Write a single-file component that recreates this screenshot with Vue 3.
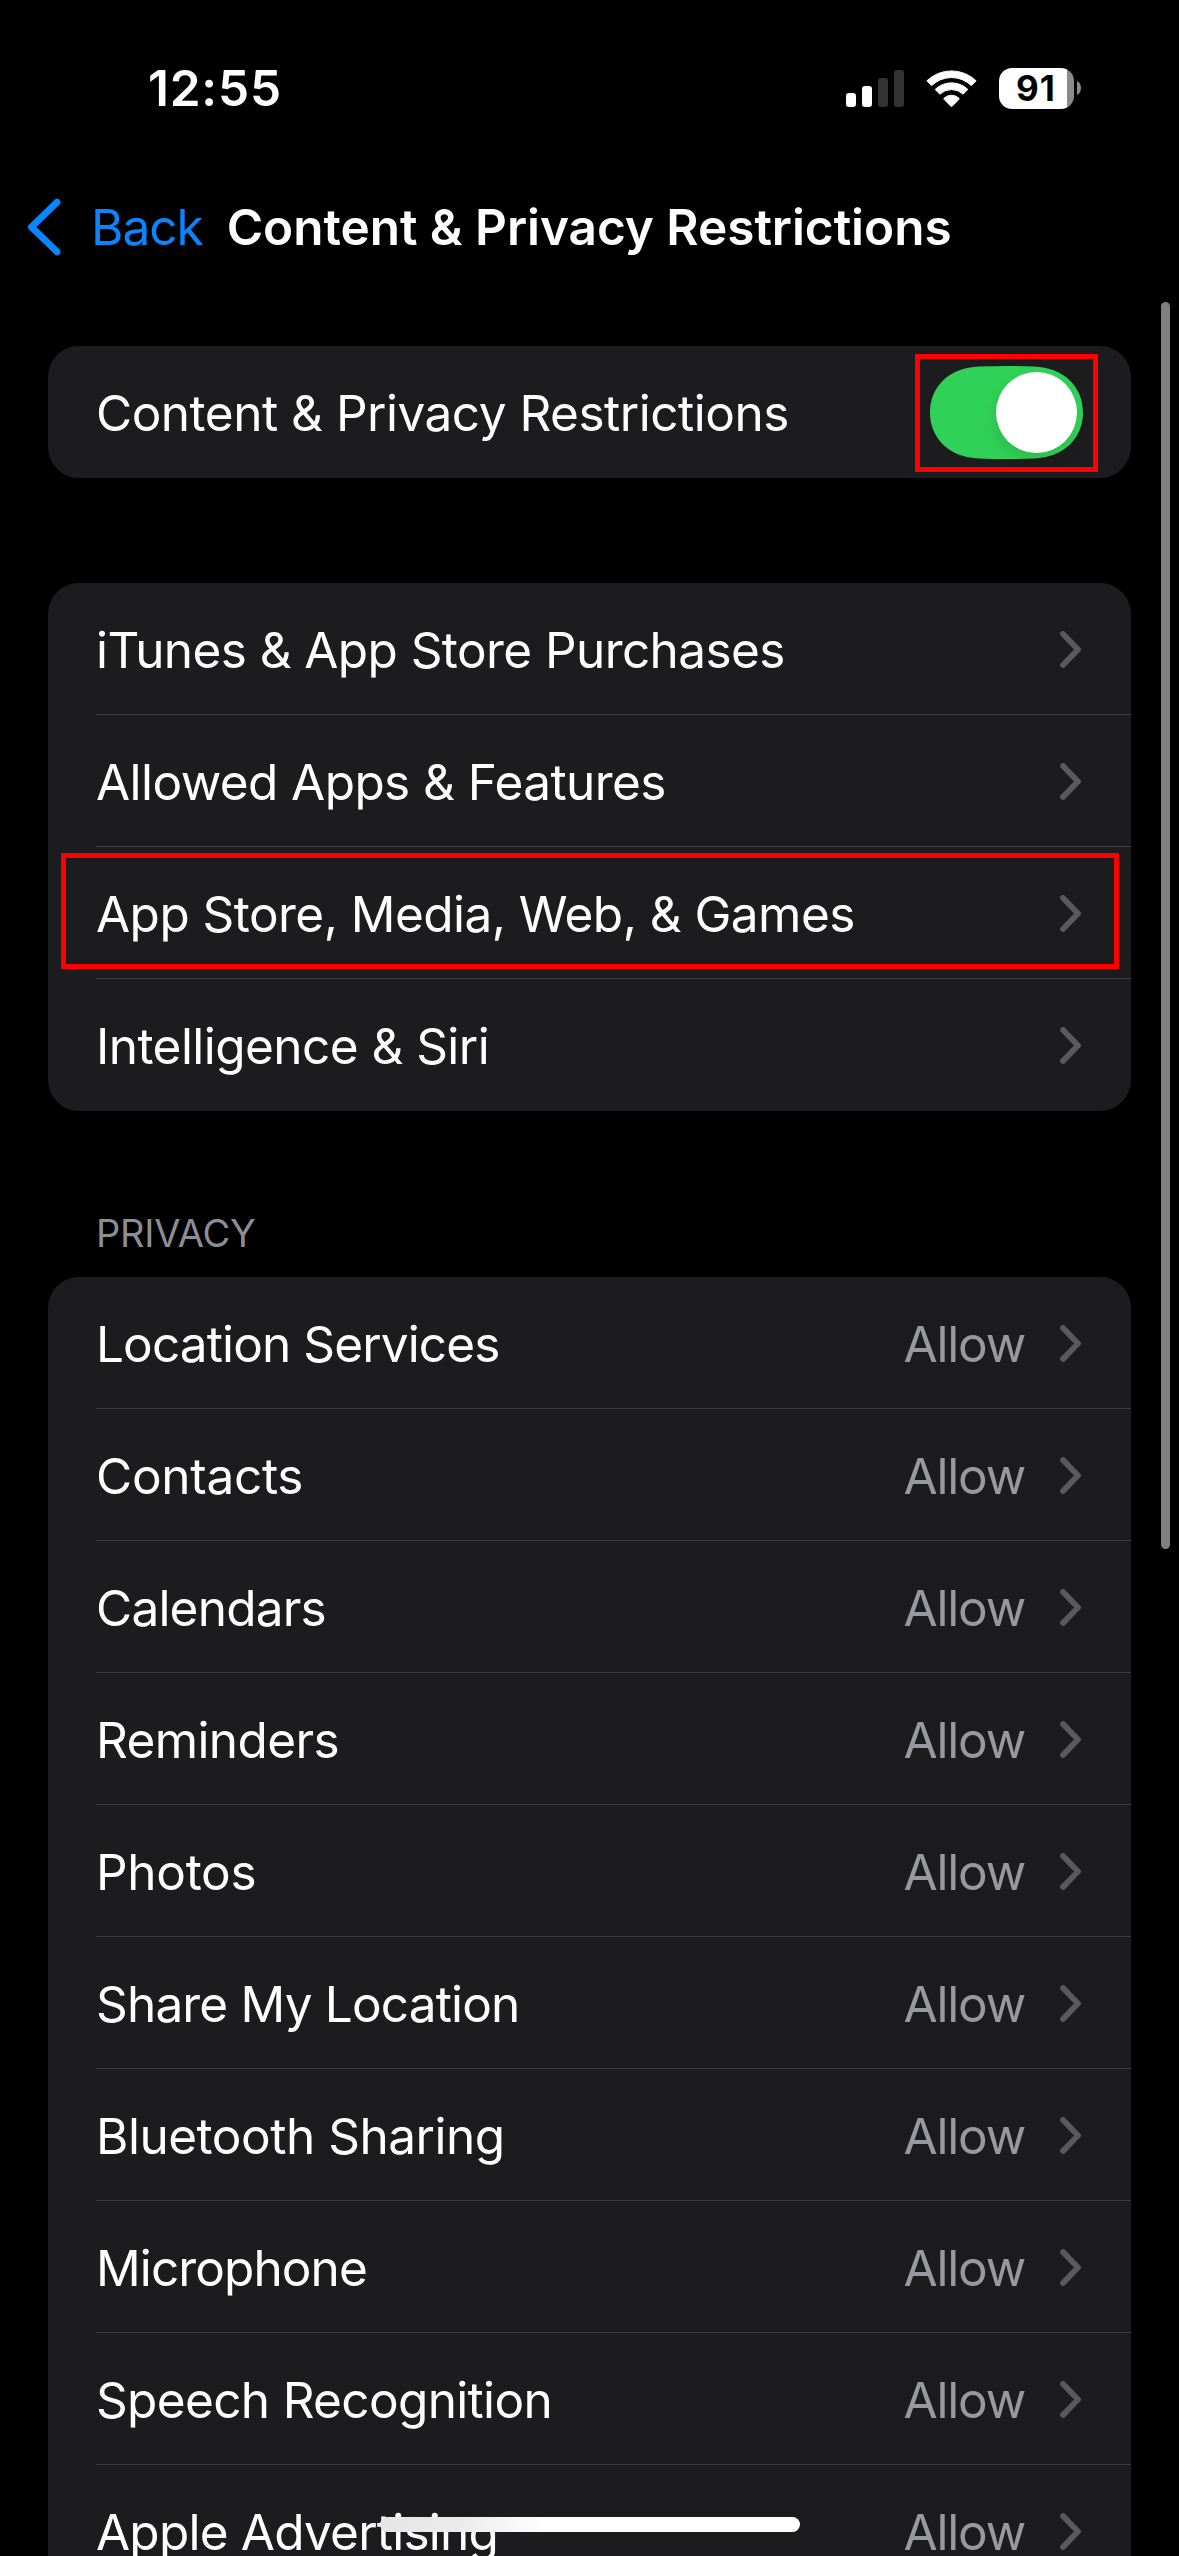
<script setup>
const general = [
  { label: 'iTunes & App Store Purchases', tracking: -0.58 },
  { label: 'Allowed Apps & Features', tracking: -0.57 },
  { label: 'App Store, Media, Web, & Games', tracking: -0.54, marked: true },
  { label: 'Intelligence & Siri', tracking: -0.55 },
]

const privacy = [
  { label: 'Location Services', tracking: -0.88 },
  { label: 'Contacts', tracking: -0.28 },
  { label: 'Calendars', tracking: -0.78 },
  { label: 'Reminders', tracking: -0.62 },
  { label: 'Photos', tracking: -0.3 },
  { label: 'Share My Location', tracking: -0.82 },
  { label: 'Bluetooth Sharing', tracking: -0.48 },
  { label: 'Microphone', tracking: -0.89 },
  { label: 'Speech Recognition', tracking: -0.66 },
  { label: 'Apple Advertising', tracking: -0.78 },
]
</script>

<template>
  <div class="screen">
    <header class="status">
      <span class="time">12:55</span>
      <div class="indicators">
        <svg class="signal" width="58" height="37" viewBox="0 0 58 37">
          <rect x="0" y="23" width="10" height="14" rx="3" fill="#fff" />
          <rect x="16" y="16" width="10" height="21" rx="3" fill="#fff" />
          <rect x="32" y="8" width="10" height="29" rx="3" fill="#333" />
          <rect x="48" y="0" width="10" height="37" rx="3" fill="#333" />
        </svg>
        <svg class="wifi" width="51" height="37" viewBox="0 0 51 37">
          <g fill="#fff" stroke="#fff" stroke-width="1" stroke-linejoin="round">
            <path d="M.9 10.8A35.5 35.5 0 0 1 50.1 10.8L45.4 15.6A28.6 28.6 0 0 0 5.6 15.6Z" />
            <path d="M9.2 19.4A23.6 23.6 0 0 1 41.8 19.4L37.1 24.2A16.8 16.8 0 0 0 13.9 24.2Z" />
            <path d="M18 28.2A11 11 0 0 1 33 28.2Q33.4 28.8 33 29.2L26.2 36.2Q25.5 36.8 24.8 36.2L18 29.2Q17.6 28.8 18 28.2Z" />
          </g>
        </svg>
        <div class="battery">
          <span class="level">91</span>
          <svg class="nub" width="4" height="14" viewBox="0 0 4 14">
            <path d="M0 0Q4 2 4 7T0 14Z" fill="#8a8a8a" />
          </svg>
        </div>
      </div>
    </header>

    <nav class="nav">
      <svg class="back-icon" width="34" height="58" viewBox="0 0 34 58">
        <path d="M30 4.2L4.5 29L30 53.8" fill="none" stroke="#0a84ff" stroke-width="6.8" stroke-linecap="round" stroke-linejoin="round" />
      </svg>
      <span class="back">Back</span>
      <h1 class="title">Content &amp; Privacy Restrictions</h1>
    </nav>

    <main class="content">
      <section class="card">
        <div class="row">
          <span class="label main-label">Content &amp; Privacy Restrictions</span>
          <div class="switch">
            <svg width="153" height="93" viewBox="0 0 153 93">
              <path d="M49 0.6Q76.5 -0.6 104 0.6C134 1.5 153 21 153 46.5S134 91.5 104 92.4Q76.5 93.6 49 92.4C19 91.5 0 72 0 46.5S19 1.5 49 0.6Z" fill="#30d158" />
            </svg>
            <span class="knob"></span>
            <span class="mark switch-mark"></span>
          </div>
        </div>
      </section>

      <section class="card second">
        <div v-for="item in general" :key="item.label" class="row">
          <span class="label" :style="{ letterSpacing: item.tracking + 'px' }">{{ item.label }}</span>
          <svg class="chevron" width="21" height="37" viewBox="0 0 21 37">
            <path d="M3 3L18 18.5L3 34" />
          </svg>
          <span v-if="item.marked" class="mark row-mark"></span>
        </div>
      </section>

      <h2 class="heading">PRIVACY</h2>
      <section class="card">
        <div v-for="item in privacy" :key="item.label" class="row">
          <span class="label" :style="{ letterSpacing: item.tracking + 'px' }">{{ item.label }}</span>
          <span class="value">Allow</span>
          <svg class="chevron" width="21" height="37" viewBox="0 0 21 37">
            <path d="M3 3L18 18.5L3 34" />
          </svg>
        </div>
      </section>
    </main>

    <div class="scrollbar"></div>
    <div class="home"></div>
  </div>
</template>

<style>
html,
body {
  margin: 0;
  background: #000;
}
</style>

<style scoped>
.screen {
  position: relative;
  width: 1179px;
  height: 2556px;
  overflow: hidden;
  background: #000;
  color: #fff;
  font-family: Inter, "Liberation Sans", sans-serif;
  font-size: 49.5px;
  line-height: 60px;
  white-space: nowrap;
}

.status {
  display: flex;
  align-items: center;
  justify-content: space-between;
  height: 176px;
  padding: 0 98px 0 148px;
  box-sizing: border-box;
}

.time {
  font-weight: 600;
  letter-spacing: 0.8px;
}

.indicators {
  display: flex;
  align-items: center;
}

.wifi {
  margin-left: 22px;
}

.battery {
  display: flex;
  align-items: center;
  gap: 3px;
  margin-left: 22px;
}

.level {
  width: 75px;
  height: 41px;
  box-sizing: border-box;
  padding-left: 17px;
  border-radius: 13px;
  background: linear-gradient(90deg, #fff 68px, #8a8a8a 68px);
  color: #000;
  font-size: 35px;
  font-weight: 650;
  line-height: 41px;
  letter-spacing: 1px;
}

.nav {
  display: flex;
  align-items: center;
  height: 102px;
  padding-left: 27px;
}

.back {
  margin-left: 30px;
  color: #0a84ff;
  letter-spacing: -1px;
}

.title {
  margin: 0 0 0 24px;
  font-size: inherit;
  font-weight: 600;
  letter-spacing: -0.03px;
}

.content {
  padding: 68px 48px 0;
}

.card {
  border-radius: 31px;
  background: #1c1c1e;
}

.second {
  margin-top: 105px;
}

.row {
  position: relative;
  display: flex;
  align-items: center;
  height: 132px;
  margin-left: 48px;
  padding-right: 50px;
  box-sizing: border-box;
}

.row:not(:last-child) {
  box-shadow: inset 0 -1px #3d3d41;
}

.label {
  flex: 1;
  padding-top: 2px;
}

.main-label {
  letter-spacing: -0.49px;
}

.value {
  padding-top: 2px;
  margin-right: 35px;
  color: #98989f;
  letter-spacing: -1.2px;
}

.chevron {
  fill: none;
  stroke: #5a5a5e;
  stroke-width: 5.8;
  stroke-linecap: round;
  stroke-linejoin: round;
}

.switch {
  position: relative;
  width: 153px;
  height: 93px;
  margin-right: -2px;
}

.switch svg {
  display: block;
}

.knob {
  position: absolute;
  top: 6px;
  right: 6px;
  width: 81px;
  height: 81px;
  border-radius: 50%;
  background: #fff;
  box-shadow: -2px 6px 14px rgba(0, 0, 0, 0.1);
}

.mark {
  position: absolute;
  border: 5px solid #f00;
  box-sizing: border-box;
}

.switch-mark {
  top: -12px;
  left: -15px;
  width: 183px;
  height: 118px;
}

.row-mark {
  top: 6px;
  left: -35px;
  right: 12px;
  height: 116px;
}

.heading {
  height: 88px;
  margin: 0;
  padding: 78px 0 0 48px;
  color: #8d8d93;
  font-size: 38px;
  font-weight: 400;
  line-height: 88px;
  letter-spacing: -0.2px;
}

.scrollbar {
  position: absolute;
  top: 302px;
  right: 9px;
  width: 9px;
  height: 1247px;
  border-radius: 5px;
  background: #808080;
}

.home {
  position: absolute;
  top: 2517px;
  left: 380px;
  width: 420px;
  height: 15px;
  border-radius: 8px;
  background: linear-gradient(90deg, #e6e6e6 0, #ebebeb 80px, #fff 165px);
}
</style>
